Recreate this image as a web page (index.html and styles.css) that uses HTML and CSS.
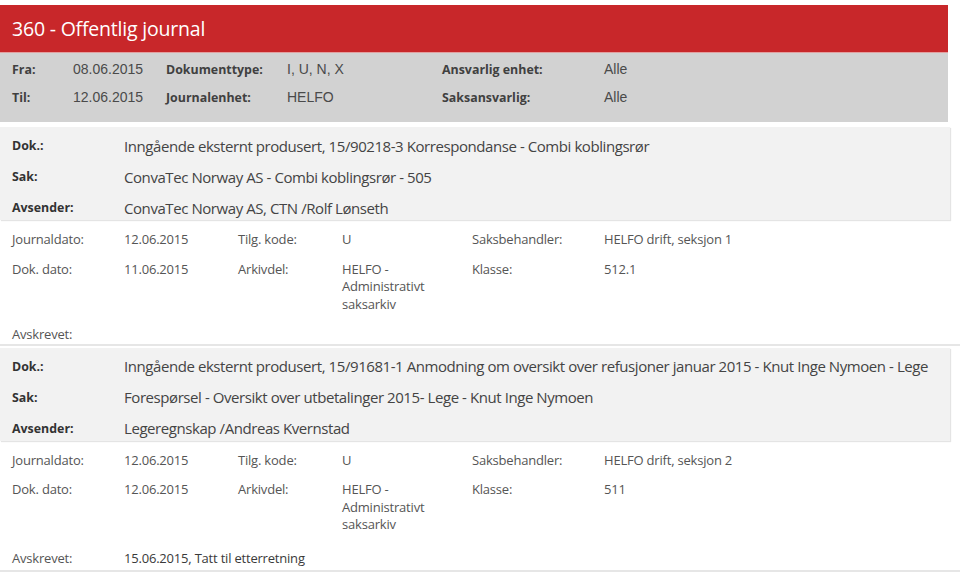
FILE: index.html
```html
<!DOCTYPE html>
<html lang="no">
<head>
<meta charset="utf-8">
<title>360 - Offentlig journal</title>
<link rel="stylesheet" href="styles.css">
</head>
<body>
<header class="topbar">360 - Offentlig journal</header>
<section class="filters">
  <span class="f-label">Fra:</span><span class="f-value">08.06.2015</span>
  <span class="f-label">Dokumenttype:</span><span class="f-value">I, U, N, X</span>
  <span class="f-label">Ansvarlig enhet:</span><span class="f-value">Alle</span>
  <span class="f-label">Til:</span><span class="f-value">12.06.2015</span>
  <span class="f-label">Journalenhet:</span><span class="f-value">HELFO</span>
  <span class="f-label">Saksansvarlig:</span><span class="f-value">Alle</span>
</section>

<article class="record">
  <div class="summary">
    <span class="s-label">Dok.:</span><span class="s-value">Inngående eksternt produsert, 15/90218-3 Korrespondanse - Combi koblingsrør</span>
    <span class="s-label">Sak:</span><span class="s-value">ConvaTec Norway AS - Combi koblingsrør - 505</span>
    <span class="s-label">Avsender:</span><span class="s-value">ConvaTec Norway AS, CTN /Rolf Lønseth</span>
  </div>
  <div class="details">
    <span>Journaldato:</span><span>12.06.2015</span><span>Tilg. kode:</span><span>U</span><span>Saksbehandler:</span><span>HELFO drift, seksjon 1</span>
    <span>Dok. dato:</span><span>11.06.2015</span><span>Arkivdel:</span><span class="wrap">HELFO - Administrativt saksarkiv</span><span>Klasse:</span><span>512.1</span>
    <span class="last">Avskrevet:</span><span class="last span5"></span>
  </div>
</article>

<article class="record">
  <div class="summary">
    <span class="s-label">Dok.:</span><span class="s-value">Inngående eksternt produsert, 15/91681-1 Anmodning om oversikt over refusjoner januar 2015 - Knut Inge Nymoen - Lege</span>
    <span class="s-label">Sak:</span><span class="s-value">Forespørsel - Oversikt over utbetalinger 2015- Lege - Knut Inge Nymoen</span>
    <span class="s-label">Avsender:</span><span class="s-value">Legeregnskap /Andreas Kvernstad</span>
  </div>
  <div class="details has-avs">
    <span>Journaldato:</span><span>12.06.2015</span><span>Tilg. kode:</span><span>U</span><span>Saksbehandler:</span><span>HELFO drift, seksjon 2</span>
    <span>Dok. dato:</span><span>12.06.2015</span><span>Arkivdel:</span><span class="wrap">HELFO - Administrativt saksarkiv</span><span>Klasse:</span><span>511</span>
    <span class="last">Avskrevet:</span><span class="last span5 avs">15.06.2015, Tatt til etterretning</span>
  </div>
</article>
</body>
</html>
```

FILE: styles.css
```css
* { box-sizing: border-box; }

html, body {
  margin: 0;
  padding: 0;
  background: #ffffff;
  font-family: "Open Sans", "Noto Sans", sans-serif;
  overflow: hidden;
}

.topbar {
  margin-top: 5px;
  width: 948px;
  height: 47px;
  background: #c8272a;
  color: #ffffff;
  font-size: 19.5px;
  line-height: 47px;
  padding-left: 12px;
  letter-spacing: -0.2px;
}

.filters {
  width: 948px;
  height: 70px;
  background: #d2d2d2;
  border-top: 1px solid #e2a0a0;
  display: grid;
  grid-template-columns: 61px 93px 121px 155px 162px 1fr;
  grid-auto-rows: 28px;
  padding: 3px 0 0 12px;
  align-items: center;
}

.f-label {
  font-weight: bold;
  font-size: 12.4px;
  color: #404040;
  position: relative;
  top: -1px;
}

.f-value {
  font-family: "Liberation Sans", Arial, sans-serif;
  font-size: 14px;
  color: #4a4a4a;
  position: relative;
  top: -1px;
}

.record {
  width: 960px;
  border-bottom: 2px solid #e6e6e6;
}

.summary {
  margin-top: 5px;
  width: 950px;
  background: #f2f2f2;
  box-shadow: 1px 1px 1px #e4e4e4;
  display: grid;
  grid-template-columns: 112px 1fr;
  grid-auto-rows: 31px;
  align-items: center;
  padding: 3px 0 0 12px;
  height: 93px;
}

.record + .record .summary {
  margin-top: 2px;
}

.s-label {
  font-weight: bold;
  font-size: 12.4px;
  color: #333333;
}

.s-value {
  font-size: 15px;
  color: #444444;
  letter-spacing: -0.43px;
  white-space: nowrap;
}

.details {
  display: grid;
  grid-template-columns: 112px 114px 104px 130px 132px 1fr;
  padding: 11px 0 0 12px;
  font-size: 13px;
  line-height: 17.5px;
  color: #555555;
  row-gap: 12px;
  letter-spacing: -0.2px;
}

.details.has-avs {
  padding-bottom: 3px;
}

.details .wrap {
  width: 100px;
}

.details .span5 {
  grid-column: 2 / span 5;
}

.details .last {
  margin-top: 1px;
}

.details.has-avs .last {
  margin-top: 4px;
}

.details .avs {
  color: #3a3a3a;
}
```
